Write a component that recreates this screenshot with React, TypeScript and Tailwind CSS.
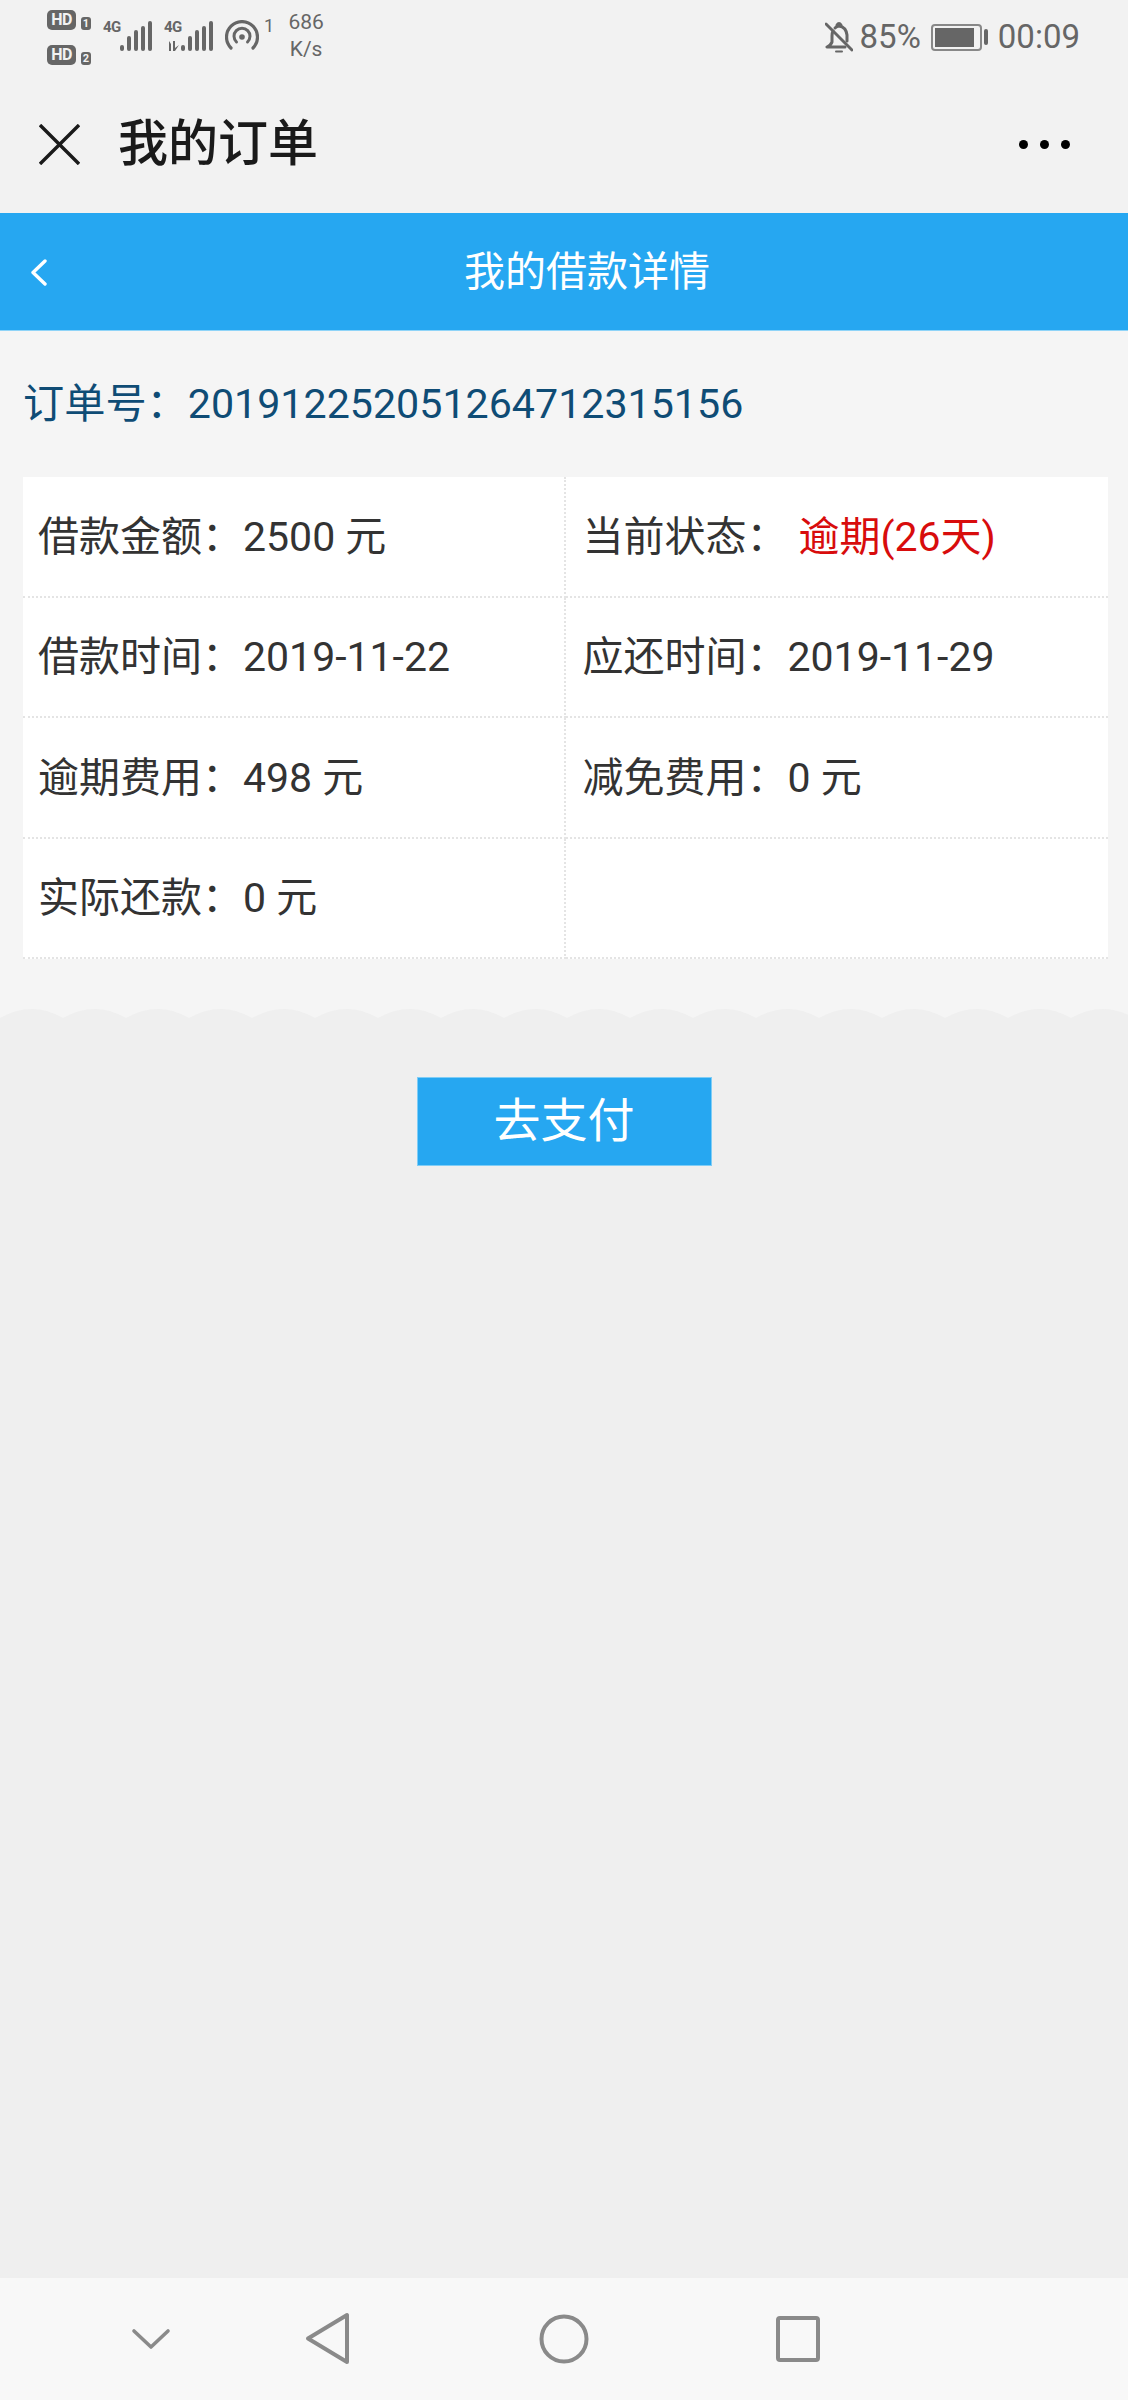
const cjk = "font-['Roboto','Noto_Sans_CJK_SC',sans-serif]";

function Bars({ heights }: { heights: number[] }) {
  return (
    <div className="flex items-end gap-[3px]">
      {heights.map((h, i) => (
        <div key={i} className="w-[4px] bg-[#666] rounded-[2px]" style={{ height: h }} />
      ))}
    </div>
  );
}

function Hd({ n }: { n: number }) {
  return (
    <div className="flex items-end gap-[5px] w-[44px]">
      <div className="w-[29px] h-[20px] rounded-[5px] bg-[#666] text-[#f2f2f2] text-[16px] leading-[20px] font-bold text-center tracking-[-0.5px]">HD</div>
      <div className="w-[10px] h-[13px] rounded-[3px] bg-[#666] text-[#f2f2f2] text-[11px] leading-[13px] font-bold text-center">{n}</div>
    </div>
  );
}

function BellOffIcon() {
  return (
    <svg width="28" height="31" viewBox="0 0 28 31" fill="none" stroke="#666" strokeWidth="3" strokeLinecap="round" strokeLinejoin="round">
      <path d="M1 2 L27 28" />
      <path d="M8 9 Q7 11 7 14 L7 20 Q6 23 2 25 L20 25" />
      <path d="M10 6 Q12 4 14 4 Q21 5 22 13 L22 19" />
      <path d="M12 3 Q14 0 16 3" />
      <path d="M11 29.5 L17 29.5" strokeWidth="2" />
    </svg>
  );
}

function StatusBar() {
  return (
    <div className="h-[60px] flex items-start justify-between pl-[47px] pr-[48px] text-[#666]">
      <div className="flex items-start">
        <div className="flex flex-col gap-[15px] pt-[10px] mr-[12px]">
          <Hd n={1} />
          <Hd n={2} />
        </div>
        <div className="relative w-[49px] h-[31px] mt-[20px] mr-[12px]">
          <span className="absolute left-0 -top-[2px] text-[15px] leading-[18px] font-bold tracking-[-0.5px]">4G</span>
          <div className="absolute left-[17px] bottom-0">
            <Bars heights={[6, 15, 21, 25, 30]} />
          </div>
        </div>
        <div className="relative w-[49px] h-[31px] mt-[20px] mr-[12px]">
          <span className="absolute left-0 -top-[2px] text-[15px] leading-[18px] font-bold tracking-[-0.5px]">4G</span>
          <svg width="16" height="10" viewBox="0 0 16 10" fill="#666" className="absolute left-0 bottom-0">
            <path d="M5 0 L5 10 L7 10 L7 3 Z" />
            <path d="M9 0 L11 0 L11 7 L15 4 L11 10 L9 10 Z" />
          </svg>
          <div className="absolute left-[17px] bottom-0">
            <Bars heights={[6, 15, 21, 25, 30]} />
          </div>
        </div>
        <svg width="34" height="31" viewBox="0 0 34 31" fill="none" stroke="#666" className="mt-[20px]">
          <path d="M6 28 A15.5 15.5 0 1 1 28 28" strokeWidth="3.2" strokeLinecap="round" />
          <path d="M11.5 22 A8 8 0 1 1 22.5 22" strokeWidth="3" strokeLinecap="round" />
          <circle cx="17" cy="17" r="2.8" fill="#666" stroke="none" />
        </svg>
        <span className="ml-[5px] mt-[17px] text-[18px] leading-[18px]">1</span>
        <div className="ml-[13px] mt-[9px] w-[38px] text-[21px] leading-[27px] text-center whitespace-nowrap">
          <div>686</div>
          <div>K/s</div>
        </div>
      </div>
      <div className="flex items-center pt-[18px] text-[33px] leading-[38px]">
        <BellOffIcon />
        <span className="ml-[7px]">85%</span>
        <div className="ml-[10px] w-[51px] h-[27px] rounded-[4px] border-2 border-[#888] p-[2px]">
          <div className="h-full w-[39px] bg-[#666]" />
        </div>
        <div className="w-[4px] h-[16px] ml-[2px] rounded-[2px] bg-[#666]" />
        <span className="ml-[10px]">00:09</span>
      </div>
    </div>
  );
}

function Cell({ label, value, red, right }: { label?: string; value?: string; red?: boolean; right?: boolean }) {
  return (
    <div
      className={`h-[120.5px] pt-[2px] flex items-center text-[41px] text-[#333] border-b-2 border-dotted border-[#e4e4e4] ${right ? "pl-[17px]" : "pl-[15px] border-r-2"}`}
    >
      {label && <span>{label}：</span>}
      {value && <span className={red ? "text-[#d80c0c] ml-[11px]" : ""}>{value}</span>}
    </div>
  );
}

function Wave() {
  const bumps = Array.from({ length: 19 }, (_, i) => i * 63);
  const d = "M0 12 L0 10 " + bumps.map((x) => `Q${x + 32} -8 ${x + 63} 10`).join(" ") + " L1128 12 Z";
  return (
    <svg width="1128" height="12" viewBox="0 0 1128 12" className="block bg-[#f5f5f5]">
      <path d={d} fill="#efefef" />
    </svg>
  );
}

export default function App() {
  return (
    <div className={`w-[1128px] h-[2400px] flex flex-col bg-[#efefef] ${cjk}`}>
      <div className="bg-[#f2f2f2]">
        <StatusBar />
        <div className="h-[153px] flex items-center justify-between pl-[39px] pr-[58px] pt-[15px]">
          <div className="flex items-center">
            <svg width="41" height="41" viewBox="0 0 41 41" stroke="#1a1a1a" strokeWidth="3.4" fill="none">
              <path d="M1 1 L40 40 M40 1 L1 40" />
            </svg>
            <span className="ml-[38px] text-[50px] font-medium text-[#1a1a1a]">我的订单</span>
          </div>
          <div className="flex gap-[12px]">
            <div className="w-[9px] h-[9px] rounded-full bg-black" />
            <div className="w-[9px] h-[9px] rounded-full bg-black" />
            <div className="w-[9px] h-[9px] rounded-full bg-black" />
          </div>
        </div>
      </div>

      <div className="relative h-[118px] bg-[#26a7f1] border-b border-[#8fd4f8] flex items-center justify-center pl-[46px] pt-[2px]">
        <svg width="18" height="27" viewBox="0 0 18 27" fill="none" stroke="#fff" strokeWidth="3.4" strokeLinecap="round" strokeLinejoin="round" className="absolute left-[30px] top-[46px]">
          <path d="M15 2 L3 13.5 L15 25" />
        </svg>
        <span className="text-[41px] text-white">我的借款详情</span>
      </div>

      <div className="bg-[#f5f5f5] h-[677px] px-[23px]">
        <div className="h-[146px] flex items-center text-[41.2px] text-[#0f4c75] pt-[2px]">
          <span>订单号：</span>
          <span>201912252051264712315156</span>
        </div>
        <div className="w-[1085px] grid grid-cols-2 bg-white">
          <Cell label="借款金额" value="2500 元" />
          <Cell label="当前状态" value="逾期(26天)" red right />
          <Cell label="借款时间" value="2019-11-22" />
          <Cell label="应还时间" value="2019-11-29" right />
          <Cell label="逾期费用" value="498 元" />
          <Cell label="减免费用" value="0 元" right />
          <Cell label="实际还款" value="0 元" />
          <Cell right />
        </div>
      </div>
      <Wave />

      <div className="flex-1 flex flex-col items-center pt-[57px]">
        <div className="w-[295px] h-[89px] bg-[#26a7f1] border border-[#7fcdf6] flex items-center justify-center text-[47px] text-white">
          去支付
        </div>
      </div>

      <div className="h-[122px] bg-[#f8f8f8] relative">
        <svg width="1128" height="122" viewBox="0 0 1128 122" fill="none" stroke="#8a8a8a" className="absolute left-0 top-0">
          <path d="M134 53 L151 69 L168 53" strokeWidth="3.6" strokeLinecap="round" strokeLinejoin="round" />
          <path d="M347 37 L347 84 L308 60.5 Z" strokeWidth="4" strokeLinejoin="round" />
          <circle cx="564" cy="61" r="22.5" strokeWidth="4" />
          <rect x="778" y="40" width="40" height="42" rx="2" strokeWidth="4" />
        </svg>
      </div>
    </div>
  );
}
